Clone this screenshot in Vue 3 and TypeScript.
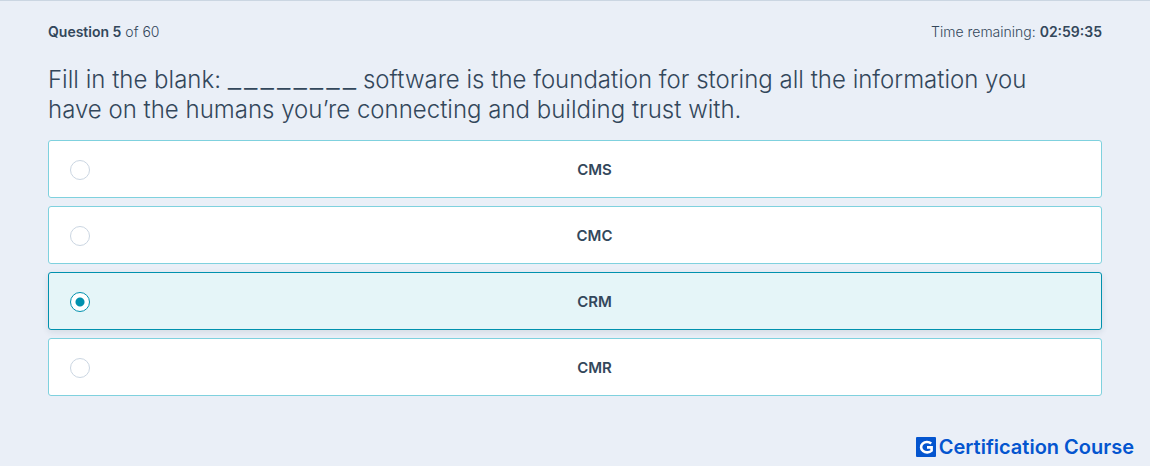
<script setup lang="ts">
import { ref } from 'vue'

const answers: string[] = ['CMS', 'CMC', 'CRM', 'CMR']
const selected = ref<string>('CRM')
const blankLength = 8
</script>

<template>
  <main class="exam">
    <header class="status">
      <p><strong>Question 5</strong> of 60</p>
      <p>Time remaining: <strong>02:59:35</strong></p>
    </header>

    <fieldset class="question">
      <legend>
        <span>Fill in the blank: </span>
        <span class="blank"><span v-for="n in blankLength" :key="n">_</span></span>
        <span>
          software is the foundation for storing all the information you have on the humans you’re
          connecting and building trust with.
        </span>
      </legend>
      <label
        v-for="answer in answers"
        :key="answer"
        class="answer"
        :class="{ selected: selected === answer }"
      >
        <input v-model="selected" type="radio" name="answer" :value="answer" />
        <span>{{ answer }}</span>
      </label>
    </fieldset>

    <footer class="brand">
      <svg class="logo" viewBox="0 0 20 20" aria-hidden="true">
        <rect width="20" height="20" rx="1" fill="#0455cf" />
        <path
          d="M15.2 6.4A6 5.2 0 1 0 15.6 13.6V10.4H11"
          fill="none"
          stroke="#fff"
          stroke-width="2.6"
        />
      </svg>
      <span>Certification Course</span>
    </footer>
  </main>
</template>

<style>
body {
  margin: 0;
  background: #eaeff7;
}
</style>

<style scoped>
.exam {
  box-sizing: border-box;
  min-height: 100vh;
  display: flex;
  flex-direction: column;
  border-top: 1px solid #cbd6e2;
  background: #eaeff7;
  color: #33475b;
  font-family: Inter, 'Liberation Sans', sans-serif;
}

.status {
  display: flex;
  justify-content: space-between;
  gap: 24px;
  padding: 20px 48px 0;
  font-size: 14px;
  font-weight: 300;
  line-height: 22px;
}

.status p {
  margin: 0;
}

.status strong {
  font-weight: 600;
}

.question {
  display: flex;
  flex-direction: column;
  gap: 8px;
  min-width: 0;
  margin: 0;
  border: 0;
  padding: 22px 48px 0;
}

.question legend {
  float: left;
  max-width: 1024px;
  padding: 0 0 7px;
  font-size: 24px;
  font-weight: 300;
  line-height: 30px;
}

.blank {
  display: inline-flex;
  gap: 3px;
  font-size: 30px;
  line-height: 24px;
}

.answer {
  box-sizing: border-box;
  min-height: 58px;
  display: grid;
  grid-template-columns: 20px 1fr;
  align-items: center;
  padding: 2px 2px 0 21px;
  border: 1px solid #7fd1de;
  border-radius: 3px;
  background: #fff;
  font-size: 15px;
  font-weight: 600;
  line-height: 24px;
  text-align: center;
  cursor: pointer;
}

.answer.selected {
  border-color: #0091ae;
  background: #e5f5f8;
  box-shadow: 0 2px 6px rgba(45, 62, 80, 0.12);
}

.answer input {
  appearance: none;
  box-sizing: border-box;
  width: 20px;
  height: 20px;
  margin: 0;
  border: 1px solid #cbd6e2;
  border-radius: 50%;
  background: #fff;
}

.answer input:checked {
  border-color: #0091ae;
  background: radial-gradient(circle, #0091ae 4px, #fff 5px);
}

.brand {
  display: flex;
  justify-content: flex-end;
  align-items: center;
  gap: 3px;
  margin-top: auto;
  padding: 0 16px 7px;
  color: #0455cf;
  font-size: 20px;
  font-weight: 600;
  line-height: 24px;
}

.logo {
  width: 20px;
  height: 20px;
}
</style>
